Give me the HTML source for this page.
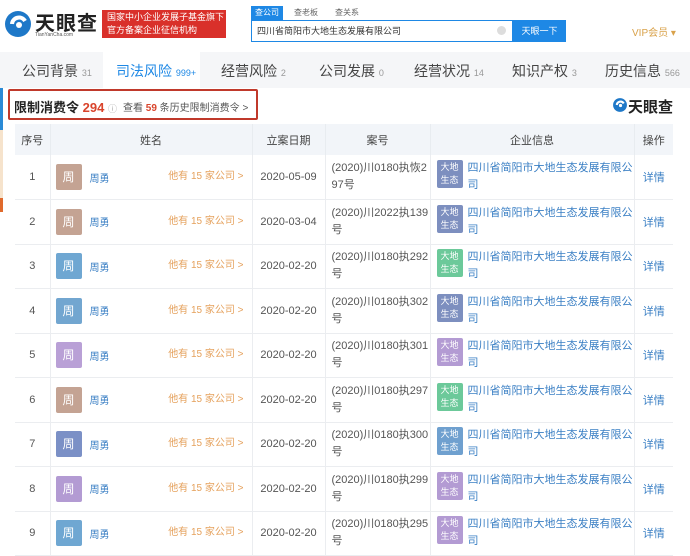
<!DOCTYPE html>
<html><head><meta charset="utf-8"><style>
*{margin:0;padding:0;box-sizing:border-box}
body{width:690px;height:555px;overflow:hidden;background:#fff;font-family:"Liberation Sans","Noto Sans CJK SC",sans-serif;position:relative;color:#444}
.abs{position:absolute}
.tabs{position:absolute;left:0;top:52px;width:690px;height:36px;background:#f5f6f8}
.tab{position:absolute;top:61px;font-size:14px;color:#444}
.tab small{font-size:9px;color:#999}
table{position:absolute;left:15px;top:124px;width:658px;border-collapse:collapse;font-size:11px;table-layout:fixed}
th{background:#f2f5f9;height:31px;font-weight:normal;font-size:11px;color:#444;border-right:1px solid #e8ecf0}
td{height:44.5px;border-bottom:1px solid #ebedf0;border-right:1px solid #ebedf0;color:#555;vertical-align:middle}
td.c{text-align:center}
.av{display:inline-block;width:26px;height:26px;color:#fff;text-align:center;line-height:26px;font-size:12px;border-radius:2px;vertical-align:middle;margin-left:5px}
.nm{color:#3a7fc4;margin-left:8px;font-size:10px;vertical-align:middle}
.oth{float:right;color:#e5a15c;font-size:10px;margin-right:8px;line-height:26px}
.bd{display:inline-block;width:26px;height:28px;color:#fff;font-size:9px;line-height:13px;text-align:center;padding-top:1px;border-radius:2px;vertical-align:top;margin:0 5px 0 6px;float:left}
.co{color:#3a7fc4;font-size:11px;line-height:17px}
.case{font-size:11px;line-height:17px;padding-left:6px}
</style></head><body>
<div class="abs" style="left:0;top:58px;width:3px;height:72px;background:#2a8ad6"></div>
<div class="abs" style="left:0;top:130px;width:3px;height:68px;background:#f6e3cc"></div>
<div class="abs" style="left:0;top:198px;width:3px;height:14px;background:#e06a2c"></div>
<!-- logo -->
<svg class="abs" style="left:3px;top:9px" width="30" height="30" viewBox="0 0 30 30"><circle cx="15" cy="15" r="13" fill="#1e78c8"/><path d="M9 15a7 7 0 0 1 13-3" stroke="#fff" stroke-width="4" fill="none"/><circle cx="16" cy="16" r="3" fill="#fff"/></svg>
<div class="abs" style="left:35px;top:7px;font-size:20px;font-weight:bold;color:#222;letter-spacing:1px">天眼查</div>
<div class="abs" style="left:35px;top:32px;font-size:5px;color:#555">TianYanCha.com</div>
<div class="abs" style="left:102px;top:10px;width:124px;height:28px;background:#d9302a;color:#fff;font-size:9px;line-height:13px;padding:1px 0 0 5px">国家中小企业发展子基金旗下<br>官方备案企业征信机构</div>
<div class="abs" style="left:251px;top:6px;width:32px;height:14px;background:#1e88e5;color:#fff;font-size:8px;text-align:center;line-height:14px">查公司</div>
<div class="abs" style="left:294px;top:7px;font-size:8px;color:#666">查老板</div>
<div class="abs" style="left:335px;top:7px;font-size:8px;color:#666">查关系</div>
<div class="abs" style="left:251px;top:20px;width:262px;height:22px;border:1px solid #1e88e5;font-size:9px;line-height:20px;padding-left:5px;color:#333">四川省简阳市大地生态发展有限公司</div>
<div class="abs" style="left:497px;top:26px;width:9px;height:9px;border-radius:50%;background:#ddd"></div>
<div class="abs" style="left:513px;top:20px;width:53px;height:22px;background:#1e88e5;color:#fff;font-size:9px;text-align:center;line-height:22px">天眼一下</div>
<div class="abs" style="left:632px;top:24px;font-size:10px;color:#d9a24a">VIP会员 ▾</div>
<div class="tabs"></div>
<div class="abs" style="left:103px;top:52px;width:97px;height:36px;background:#fff"></div>
<div class="tab" style="left:22px">公司背景 <small>31</small></div>
<div class="tab" style="left:116px;color:#1e88e5">司法风险 <small style="color:#1e88e5">999+</small></div>
<div class="tab" style="left:221px">经营风险 <small>2</small></div>
<div class="tab" style="left:319px">公司发展 <small>0</small></div>
<div class="tab" style="left:414px">经营状况 <small>14</small></div>
<div class="tab" style="left:512px">知识产权 <small>3</small></div>
<div class="tab" style="left:605px">历史信息 <small>566</small></div>
<div class="abs" style="left:8px;top:89px;width:250px;height:31px;border:2px solid #c0392b;border-radius:2px"></div>
<div class="abs" style="left:14px;top:97px;font-size:13px;font-weight:bold;color:#222">限制消费令 <span style="color:#d9442c">294</span> <span style="font-size:9px;color:#aaa;font-weight:normal">ⓘ</span></div>
<div class="abs" style="left:123px;top:99px;font-size:10px;color:#555">查看 <b style="color:#d9442c">59</b> 条历史限制消费令 &gt;</div>
<svg class="abs" style="left:612px;top:97px" width="16" height="16" viewBox="0 0 30 30"><circle cx="15" cy="15" r="13" fill="#1e78c8"/><path d="M9 15a7 7 0 0 1 13-3" stroke="#fff" stroke-width="4" fill="none"/><circle cx="16" cy="16" r="3" fill="#fff"/></svg>
<div class="abs" style="left:628px;top:96px;font-size:15px;font-weight:bold;color:#222">天眼查</div>
<table>
<colgroup><col style="width:35px"><col style="width:202px"><col style="width:73px"><col style="width:105px"><col style="width:204px"><col style="width:39px"></colgroup>
<tr><th>序号</th><th>姓名</th><th>立案日期</th><th>案号</th><th>企业信息</th><th style="border-right:none">操作</th></tr>
<tbody id="tb"></tbody>
</table>
<script>
var av=['#c4a393','#c4a393','#6fa7d2','#72a6d0','#b9a0d6','#c4a393','#7b90c6','#b39bd3','#6fa7d2'];
var bd=['#7d8fbf','#7d8fbf','#6cc99a','#7d8fbf','#b39bd3','#6cc99a','#6fa0cf','#b39bd3','#b39bd3'];
var dt=['2020-05-09','2020-03-04','2020-02-20','2020-02-20','2020-02-20','2020-02-20','2020-02-20','2020-02-20','2020-02-20'];
var cs=['(2020)川0180执恢2<br>97号','(2020)川2022执139<br>号','(2020)川0180执292<br>号','(2020)川0180执302<br>号','(2020)川0180执301<br>号','(2020)川0180执297<br>号','(2020)川0180执300<br>号','(2020)川0180执299<br>号','(2020)川0180执295<br>号'];
var h='';
for(var i=0;i<9;i++){h+='<tr><td class="c">'+(i+1)+'</td><td><span class="av" style="background:'+av[i]+'">周</span><span class="nm">周勇</span><span class="oth">他有 15 家公司 &gt;</span></td><td class="c">'+dt[i]+'</td><td class="case">'+cs[i]+'</td><td><span class="bd" style="background:'+bd[i]+'">大地<br>生态</span><div class="co">四川省简阳市大地生态发展有限公<br>司</div></td><td class="c" style="color:#3a7fc4;border-right:none">详情</td></tr>';}
document.getElementById('tb').innerHTML=h;
</script>
</body></html>
